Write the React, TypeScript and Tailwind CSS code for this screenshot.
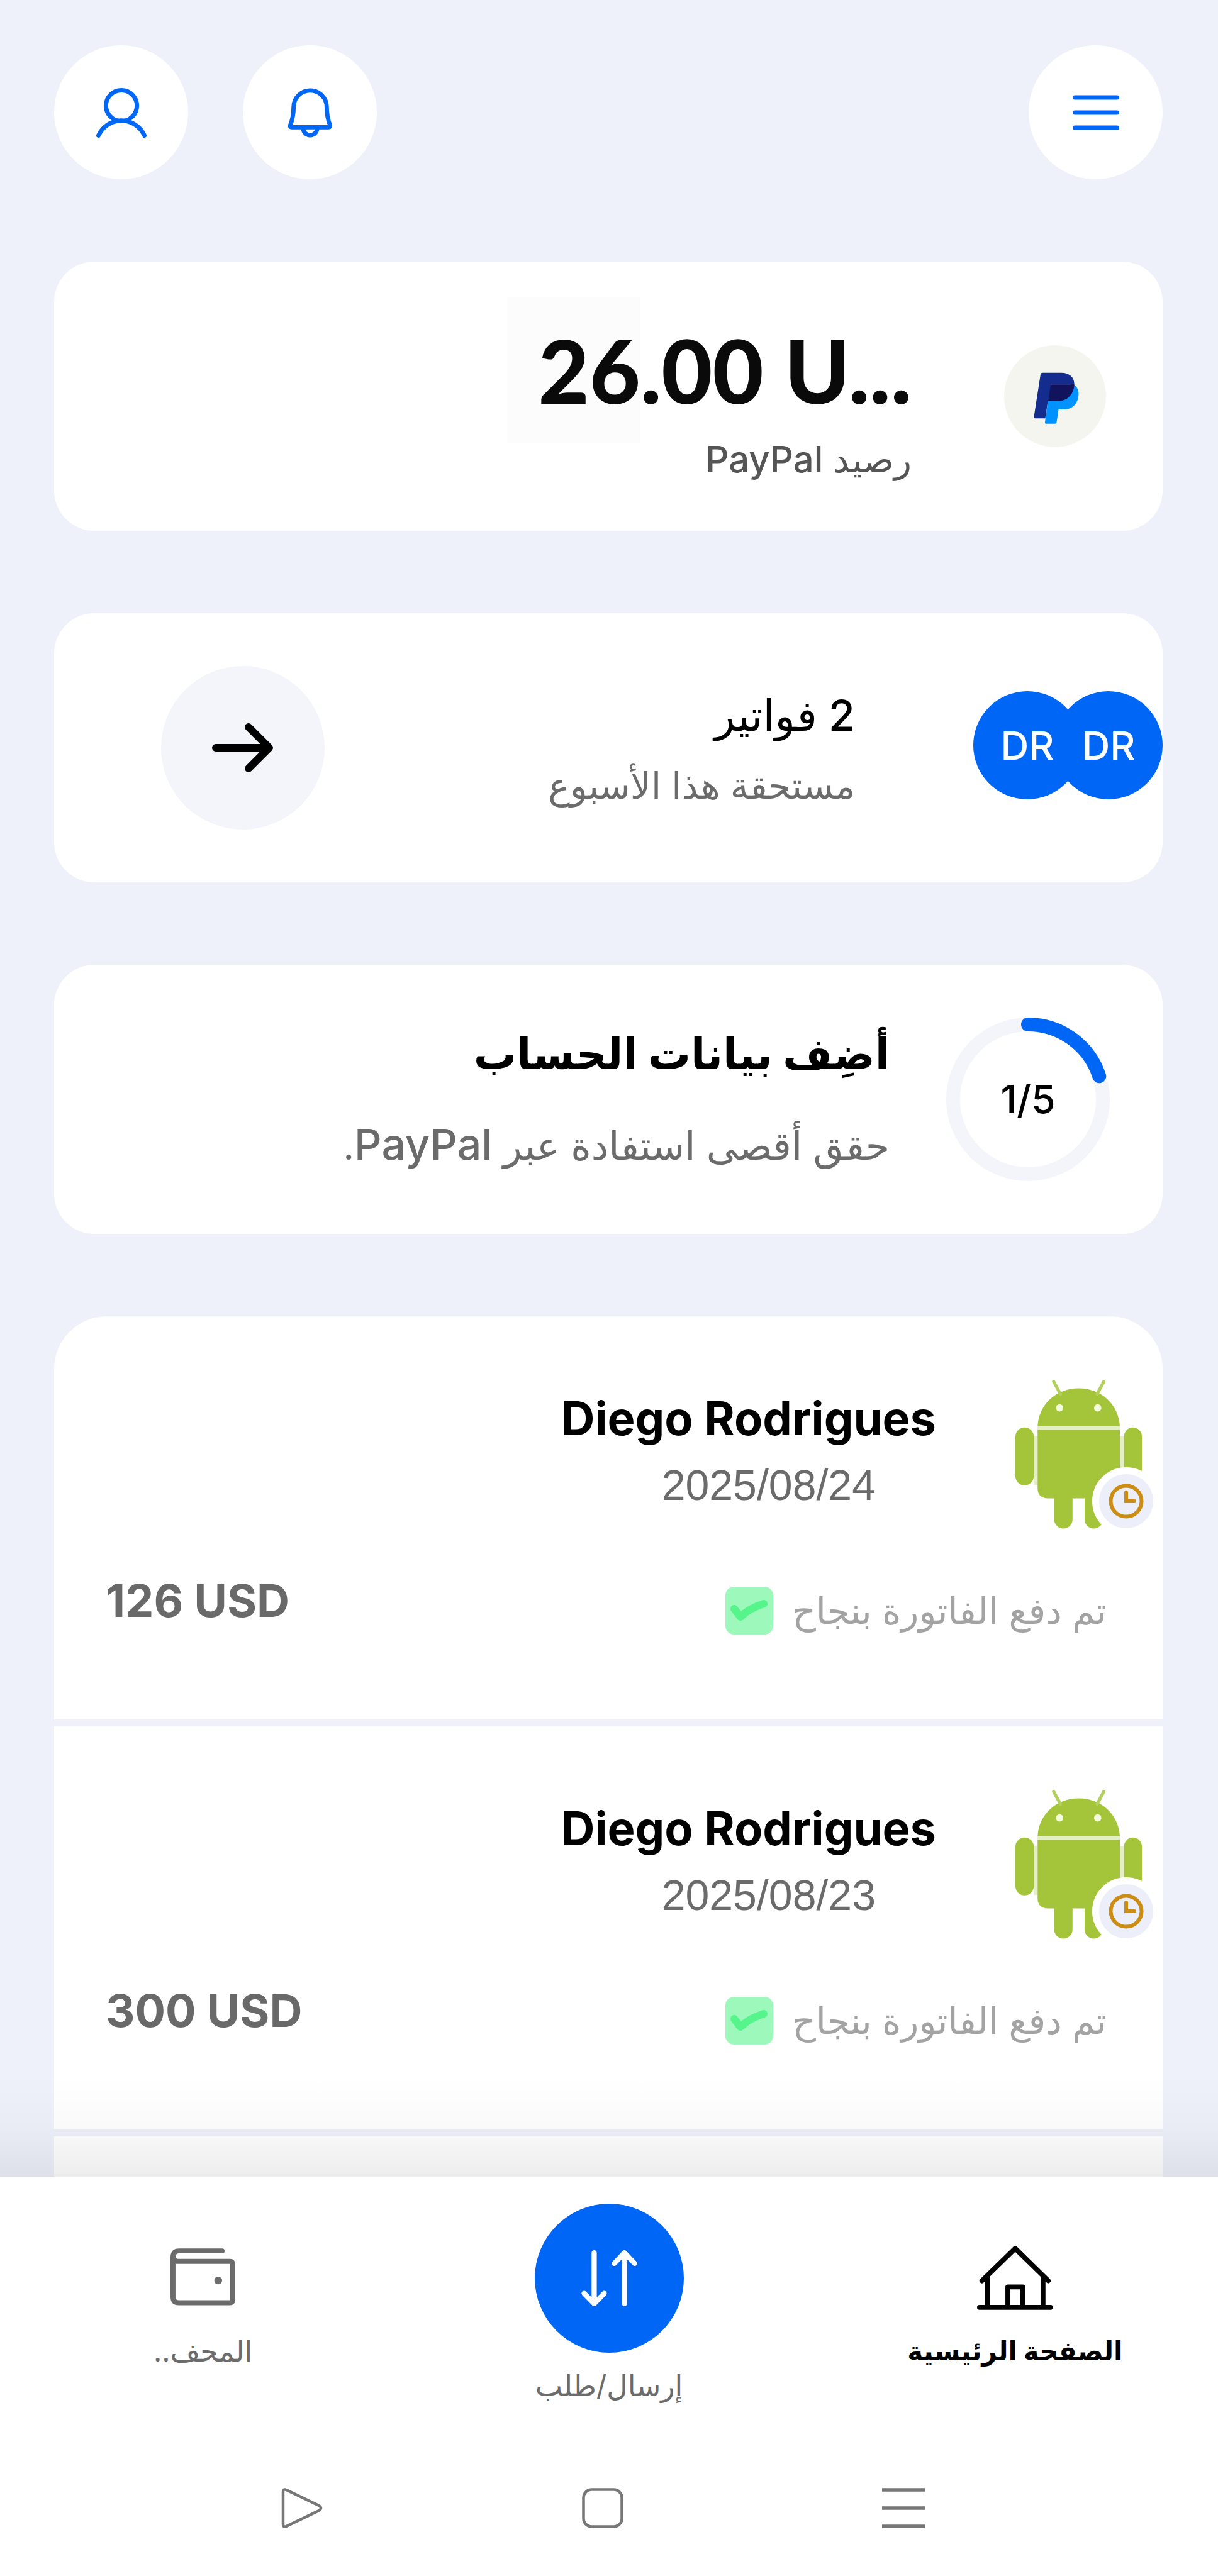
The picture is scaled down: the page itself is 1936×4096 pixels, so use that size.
import type { ReactNode } from "react";

const payments = [
  { name: "Diego Rodrigues", date: "2025/08/24", amount: "126 USD" },
  { name: "Diego Rodrigues", date: "2025/08/23", amount: "300 USD" },
];

function UserIcon() {
  return (
    <svg viewBox="0 0 80 80" className="size-20" fill="none" stroke="#0066f5" strokeWidth="7" strokeLinecap="round">
      <circle cx="40" cy="29" r="24.6" />
      <path d="M3.5 76.5A40 40 0 0 1 76.5 76.5" />
    </svg>
  );
}

function BellIcon() {
  return (
    <svg viewBox="0 0 80 82" className="size-20" fill="none" stroke="#0066f5" strokeWidth="7" strokeLinejoin="round">
      <path d="M13 32A27 27 0 0 1 67 32C67 46 69 53 72.500 62Q73 65 70 65H10Q7 65 7.500 62C11 53 13 46 13 32Z" />
      <path d="M28.500 66A11.500 12 0 0 0 51.500 66" />
    </svg>
  );
}

function MenuIcon() {
  return (
    <svg viewBox="0 0 74 56" className="h-14 w-[74px]" stroke="#0066f5" strokeWidth="7" strokeLinecap="round">
      <path d="M3.500 4H70.500M3.500 28H70.500M3.500 52H70.500" />
    </svg>
  );
}

function PayPalLogo() {
  return (
    <svg viewBox="195 180 582 584" className="size-full">
      <path
        d="M458 404H590C612 415 622 435 621 462C618 515 585 548 535 548H506L495 622Q494 630 486 630H434Q427 630 428 622Z"
        fill="#0092ff"
      />
      <path
        d="M403 346Q405 338 414 338H520C570 338 596 365 596 400C596 460 555 498 510 498H445L430 599H372Q364 599 365 590Z"
        fill="#142c8e"
      />
      <path d="M460 412Q461 404 468 404H596C594 460 555 498 510 498H447Z" fill="#11145c" />
      <path d="M464 403H574" stroke="#3b4596" strokeWidth="5" strokeLinecap="round" />
    </svg>
  );
}

function AndroidLogo() {
  return (
    <svg viewBox="108 100 724 850" className="h-[237px] w-[201px]">
      <path d="M235 364H706V384H235ZM213 420H235V700H213ZM706 420H730V700H706Z" fill="#e5efc5" />
      <g fill="#a4c439">
        <path d="M235 364C242 235 345 147 470 147S698 235 706 364Z" />
        <path d="M235 384H706V718Q706 777 646 777H295Q235 777 235 718Z" />
        <rect x="108" y="371" width="105" height="331" rx="52" />
        <rect x="730" y="371" width="102" height="331" rx="51" />
        <rect x="330" y="730" width="105" height="220" rx="52" />
        <rect x="504" y="730" width="105" height="220" rx="52" />
      </g>
      <path d="M327 108L366 180M614 108L576 180" stroke="#b3cf5c" strokeWidth="18" strokeLinecap="round" />
      <circle cx="361" cy="259" r="21" fill="#f4fade" />
      <circle cx="579" cy="259" r="21" fill="#f4fade" />
    </svg>
  );
}

function ClockIcon() {
  return (
    <svg viewBox="0 0 56 56" className="size-14" fill="none" stroke="#cb8d14" strokeWidth="6" strokeLinecap="round">
      <circle cx="28" cy="28" r="24.500" />
      <path d="M28 14V28H41" />
    </svg>
  );
}

function CheckBadge() {
  return (
    <svg viewBox="0 0 76 76" className="size-[76px]">
      <rect width="76" height="76" rx="14" fill="#9df8bb" />
      <path d="M14 35L24 48Q38 34 61 27" fill="none" stroke="#56f58b" strokeWidth="12" strokeLinecap="round" strokeLinejoin="round" />
    </svg>
  );
}

function ArrowIcon() {
  return (
    <svg viewBox="0 0 98 78" className="h-[78px] w-[98px]" fill="none" stroke="#000" strokeWidth="12" strokeLinecap="round" strokeLinejoin="round">
      <path d="M6 39H91M58 6L91 39L58 72" />
    </svg>
  );
}

function ProgressRing() {
  return (
    <div className="relative flex size-[260px] shrink-0 items-center justify-center">
      <svg viewBox="0 0 260 260" className="absolute inset-0 size-full" fill="none" strokeWidth="22">
        <circle cx="130" cy="130" r="119" stroke="#f3f5fa" />
        <path d="M130 11A119 119 0 0 1 243.200 93.200" stroke="#0066f5" strokeLinecap="round" />
      </svg>
      <span dir="ltr" className="relative text-[62px] leading-[72px] font-medium">1/5</span>
    </div>
  );
}

function HomeIcon() {
  return (
    <svg viewBox="365 255 435 367" className="h-[104px] w-[121px]" fill="none" stroke="#000" strokeWidth="28" strokeLinecap="round" strokeLinejoin="round">
      <path d="M393 455L583 270L772 455M424 430V605M742 430V605M541 605V490H626V605M379 607H785" />
    </svg>
  );
}

function WalletIcon() {
  return (
    <svg viewBox="236 255 364 367" className="h-[104px] w-[103px]" fill="none" stroke="#6b6b6b" strokeWidth="28" strokeLinecap="round" strokeLinejoin="round">
      <path d="M526 287H285Q250 287 250 322V545Q250 578 283 578H570Q585 578 585 563V362Q585 346 570 346H280Q252 346 252 318" />
      <circle cx="504" cy="453" r="22" fill="#6b6b6b" stroke="none" />
    </svg>
  );
}

function TransferIcon() {
  return (
    <svg viewBox="378 341 327 331" className="size-[91px]" fill="none" stroke="#fff" strokeWidth="30" strokeLinecap="round" strokeLinejoin="round">
      <path d="M454 360V653M396 594L454 653L512 594M629 653V360M570 421L629 360L688 421" />
    </svg>
  );
}

function RoundButton({ label, children }: { label: string; children: ReactNode }) {
  return (
    <button aria-label={label} className="flex size-[213px] items-center justify-center rounded-full bg-white">
      {children}
    </button>
  );
}

function Card({ className, children }: { className: string; children: ReactNode }) {
  return (
    <section className={"flex min-h-[428px] items-center overflow-hidden rounded-[64px] bg-white " + className}>
      {children}
    </section>
  );
}

function Payment({ name, date, amount }: { name: string; date: string; amount: string }) {
  return (
    <li className="bg-white pt-[101px] pb-[135px]">
      <div className="flex gap-[126px] pr-[33px]">
        <div className="relative shrink-0">
          <AndroidLogo />
          <span className="absolute top-[139px] left-[122px] flex size-[108px] items-center justify-center rounded-full border-[11px] border-white bg-[#eceff9]">
            <ClockIcon />
          </span>
        </div>
        <div className="flex flex-col gap-[26px] pt-[17px]">
          <h3 className="text-[74px] leading-[88px] font-bold">{name}</h3>
          <p className="pr-24 font-['Liberation_Sans'] text-[68px] leading-[72px] text-[#6b6b6b]">{date}</p>
        </div>
      </div>
      <div className="mt-[76px] flex items-start justify-between pr-[89px] pl-[82px]">
        <div className="mt-4 flex items-center gap-[30px]">
          <p className="text-[58px] leading-[76px] text-[#a3a3a3]">تم دفع الفاتورة بنجاح</p>
          <CheckBadge />
        </div>
        <p dir="ltr" className="text-[72px] leading-[76px] font-bold text-[#696969]">{amount}</p>
      </div>
    </li>
  );
}

export default function App() {
  return (
    <div dir="rtl" className="flex min-h-screen flex-col bg-[#eef1fa] font-['Inter','DejaVu_Sans',sans-serif] text-black">
      <main className="relative flex flex-1 flex-col gap-[131px] pt-[72px] pr-[88px] pl-[86px]">
        <header className="flex items-center justify-between">
          <RoundButton label="القائمة"><MenuIcon /></RoundButton>
          <div className="flex gap-[87px]">
            <RoundButton label="الإشعارات"><BellIcon /></RoundButton>
            <RoundButton label="الحساب"><UserIcon /></RoundButton>
          </div>
        </header>

        <Card className="gap-[147px] pr-[90px]">
          <div className="size-[162px] shrink-0 overflow-hidden rounded-full bg-[#f5f5f0]"><PayPalLogo /></div>
          <div className="flex flex-col gap-[30px] pt-[26px]">
            <p dir="ltr" className="text-right font-['Lato'] text-[140px] leading-[144px] font-black text-[#0a0a0a]">
              <span className="bg-[#fcfcfc] py-8 pl-[50px]">26</span>.00 U...
            </p>
            <p className="text-[58px] leading-[80px] font-medium text-[#555]">رصيد PayPal</p>
          </div>
        </Card>

        <Card className="justify-between pl-[170px]">
          <div className="flex items-center gap-[188px]">
            <div className="mb-2 flex shrink-0">
              <span className="flex size-[172px] items-center justify-center rounded-full bg-[#0066f5] text-[62px] font-medium text-white">DR</span>
              <span className="relative -mr-[43px] flex size-[172px] items-center justify-center rounded-full bg-[#0066f5] text-[62px] font-medium text-white">DR</span>
            </div>
            <div className="flex flex-col gap-6">
              <h2 className="text-[68px] leading-[96px] font-medium">2 فواتير</h2>
              <p className="text-[58px] leading-[80px] text-[#6b6b6b]">مستحقة هذا الأسبوع</p>
            </div>
          </div>
          <button aria-label="عرض الفواتير" className="flex size-[260px] shrink-0 items-center justify-center rounded-full bg-[#f3f5fa]">
            <ArrowIcon />
          </button>
        </Card>

        <Card className="gap-[90px] pr-[84px]">
          <ProgressRing />
          <div className="flex flex-col gap-12">
            <h2 className="text-[68px] leading-[96px] font-bold">أضِف بيانات الحساب</h2>
            <p className="text-[62px] leading-[96px] text-[#6b6b6b]">
              حقق أقصى استفادة عبر <span className="text-[68px] font-medium">PayPal</span>.
            </p>
          </div>
        </Card>

        <ul className="flex flex-1 flex-col gap-[11px] overflow-hidden rounded-t-[84px]">
          {payments.map((payment) => (
            <Payment key={payment.date} {...payment} />
          ))}
          <li className="min-h-16 flex-1 bg-white" />
        </ul>
        <div className="pointer-events-none absolute inset-x-0 bottom-0 h-[160px] bg-linear-to-b from-black/0 via-black/2 to-black/7" />
      </main>

      <nav className="sticky bottom-0 bg-white">
        <div className="grid grid-cols-3 pt-[43px] text-[46px] leading-[64px] text-[#6b6b6b]">
          <a href="#home" className="flex flex-col items-center gap-8 pt-[66px] text-[42px] leading-[64px] font-bold text-black">
            <HomeIcon />
            الصفحة الرئيسية
          </a>
          <a href="#send" className="flex flex-col items-center gap-5">
            <span className="flex size-[237px] items-center justify-center rounded-full bg-[#0066f5]"><TransferIcon /></span>
            إرسال/طلب
          </a>
          <a href="#wallet" className="flex flex-col items-center gap-8 pt-[66px]">
            <WalletIcon />
            المحف..
          </a>
        </div>
        <div className="flex justify-between pt-[131px] pr-[466px] pb-[76px] pl-[447px]">
          <button aria-label="التطبيقات الأخيرة">
            <svg viewBox="0 0 68 64" className="h-16 w-[68px]" stroke="#777" strokeWidth="5.500">
              <path d="M0 3H68M0 32H68M0 61H68" />
            </svg>
          </button>
          <button aria-label="الشاشة الرئيسية">
            <svg viewBox="0 0 66 64" className="h-16 w-[66px]" fill="none" stroke="#777" strokeWidth="4.500">
              <rect x="2.500" y="2.500" width="61" height="59" rx="13" />
            </svg>
          </button>
          <button aria-label="رجوع">
            <svg viewBox="0 0 66 64" className="h-16 w-[66px]" fill="none" stroke="#777" strokeWidth="4.500" strokeLinejoin="round">
              <path d="M3 6Q3 1 8 3L60 28Q66 32 60 36L8 61Q3 63 3 58Z" />
            </svg>
          </button>
        </div>
      </nav>
    </div>
  );
}
